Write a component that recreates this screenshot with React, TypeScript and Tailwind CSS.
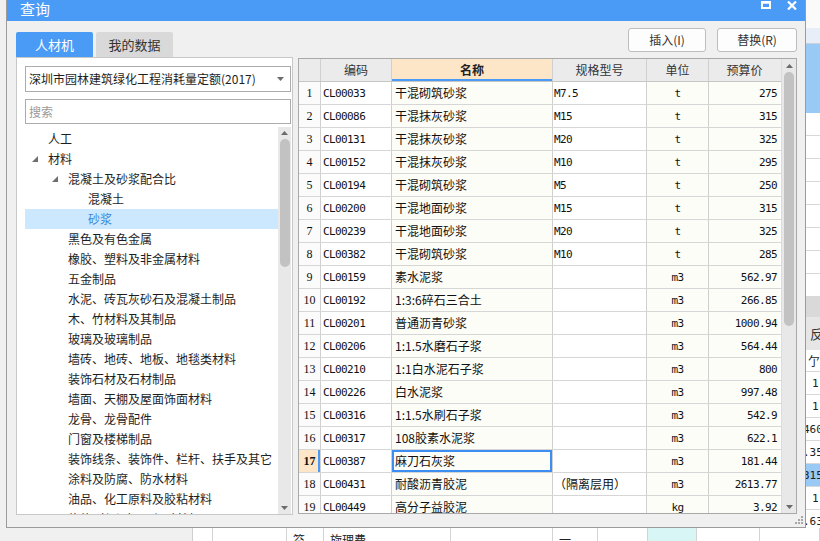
import React from "react";

type Row = { no: number; code: string; name: string; spec: string; unit: string; price: string };

const rows: Row[] = [
  { no: 1, code: "CL00033", name: "干混砌筑砂浆", spec: "M7.5", unit: "t", price: "275" },
  { no: 2, code: "CL00086", name: "干混抹灰砂浆", spec: "M15", unit: "t", price: "315" },
  { no: 3, code: "CL00131", name: "干混抹灰砂浆", spec: "M20", unit: "t", price: "325" },
  { no: 4, code: "CL00152", name: "干混抹灰砂浆", spec: "M10", unit: "t", price: "295" },
  { no: 5, code: "CL00194", name: "干混砌筑砂浆", spec: "M5", unit: "t", price: "250" },
  { no: 6, code: "CL00200", name: "干混地面砂浆", spec: "M15", unit: "t", price: "315" },
  { no: 7, code: "CL00239", name: "干混地面砂浆", spec: "M20", unit: "t", price: "325" },
  { no: 8, code: "CL00382", name: "干混砌筑砂浆", spec: "M10", unit: "t", price: "285" },
  { no: 9, code: "CL00159", name: "素水泥浆", spec: "", unit: "m3", price: "562.97" },
  { no: 10, code: "CL00192", name: "1:3:6碎石三合土", spec: "", unit: "m3", price: "266.85" },
  { no: 11, code: "CL00201", name: "普通沥青砂浆", spec: "", unit: "m3", price: "1000.94" },
  { no: 12, code: "CL00206", name: "1:1.5水磨石子浆", spec: "", unit: "m3", price: "564.44" },
  { no: 13, code: "CL00210", name: "1:1白水泥石子浆", spec: "", unit: "m3", price: "800" },
  { no: 14, code: "CL00226", name: "白水泥浆", spec: "", unit: "m3", price: "997.48" },
  { no: 15, code: "CL00316", name: "1:1.5水刷石子浆", spec: "", unit: "m3", price: "542.9" },
  { no: 16, code: "CL00317", name: "108胶素水泥浆", spec: "", unit: "m3", price: "622.1" },
  { no: 17, code: "CL00387", name: "麻刀石灰浆", spec: "", unit: "m3", price: "181.44" },
  { no: 18, code: "CL00431", name: "耐酸沥青胶泥", spec: "（隔离层用）", unit: "m3", price: "2613.77" },
  { no: 19, code: "CL00449", name: "高分子益胶泥", spec: "", unit: "kg", price: "3.92" },
];

type TreeItem = { label: string; level: 0 | 1 | 2; open?: boolean; selected?: boolean };

const tree: TreeItem[] = [
  { label: "人工", level: 0 },
  { label: "材料", level: 0, open: true },
  { label: "混凝土及砂浆配合比", level: 1, open: true },
  { label: "混凝土", level: 2 },
  { label: "砂浆", level: 2, selected: true },
  { label: "黑色及有色金属", level: 1 },
  { label: "橡胶、塑料及非金属材料", level: 1 },
  { label: "五金制品", level: 1 },
  { label: "水泥、砖瓦灰砂石及混凝土制品", level: 1 },
  { label: "木、竹材料及其制品", level: 1 },
  { label: "玻璃及玻璃制品", level: 1 },
  { label: "墙砖、地砖、地板、地毯类材料", level: 1 },
  { label: "装饰石材及石材制品", level: 1 },
  { label: "墙面、天棚及屋面饰面材料", level: 1 },
  { label: "龙骨、龙骨配件", level: 1 },
  { label: "门窗及楼梯制品", level: 1 },
  { label: "装饰线条、装饰件、栏杆、扶手及其它", level: 1 },
  { label: "涂料及防腐、防水材料", level: 1 },
  { label: "油品、化工原料及胶粘材料", level: 1 },
  { label: "绝热（保温）、耐火材料", level: 1 },
];

const indent = ["pl-[7px]", "pl-[27px]", "pl-[47px]"];

function Caret({ down }: { down?: boolean }) {
  return (
    <svg width="7" height="4" viewBox="0 0 7 4" className="text-[#6b6b6b]">
      <polygon points={down ? "0,0 7,0 3.5,4" : "0,4 7,4 3.5,0"} fill="currentColor" />
    </svg>
  );
}

function TitleBar() {
  return (
    <div className="flex h-[21px] justify-between bg-[#4a9bf5] pl-[13px] pr-[8px]">
      <span className="text-[15px] leading-[18px] text-white">查询</span>
      <div className="flex gap-[16px] pt-[1px]">
        <svg width="10" height="8" viewBox="0 0 10 8">
          <rect x="1" y="1.5" width="8" height="5.5" fill="none" stroke="white" strokeWidth="2" />
          <rect x="0" y="0" width="10" height="2.5" fill="white" />
        </svg>
        <svg width="10" height="9" viewBox="0 0 10 9">
          <path d="M1 0.5 L9 8.5 M9 0.5 L1 8.5" stroke="white" strokeWidth="2.2" />
        </svg>
      </div>
    </div>
  );
}

function LeftPanel() {
  return (
    <div className="flex w-[277px] flex-col border border-[#c8c8c8] bg-white pl-[8px] pr-[1px] pt-[8px]">
      <div className="flex h-[26px] items-center justify-between border border-[#acacac] bg-white pl-[3px] pr-[6px]">
        <span className="text-[12px] leading-none text-[#1e1e1e]">深圳市园林建筑绿化工程消耗量定额(2017)</span>
        <Caret down />
      </div>
      <div className="mt-[7px] flex h-[25px] items-center border border-[#acacac] pl-[3px] text-[12px] leading-none text-[#9a9a9a]">
        搜索
      </div>
      <div className="mt-[3px] flex min-h-0 flex-1 overflow-hidden">
        <div className="min-w-0 flex-1 pt-[2px]">
          {tree.map((t) => (
            <div
              key={t.label}
              className={`flex h-[20px] items-center whitespace-nowrap ${indent[t.level]} ${
                t.selected ? "bg-[#cce8ff] text-[#3a86d8]" : "text-[#1e1e1e]"
              }`}
            >
              <span className="flex w-[16px] items-center">
                {t.open && (
                  <svg width="6" height="6" viewBox="0 0 6 6">
                    <polygon points="6,0 6,6 0,6" fill="#6e6e6e" />
                  </svg>
                )}
              </span>
              <span className="text-[12px] leading-none">{t.label}</span>
            </div>
          ))}
        </div>
        <div className="flex w-[13px] flex-col items-center bg-[#e8e8e8]">
          <div className="flex h-[12px] items-center">
            <Caret />
          </div>
          <div className="h-[128px] w-[10px] rounded-full bg-[#c2c2c2]" />
          <div className="flex-1" />
          <div className="flex h-[12px] items-center">
            <Caret down />
          </div>
        </div>
      </div>
    </div>
  );
}

const mono = "font-['DejaVu_Sans_Mono',monospace] text-[11px] tracking-[-0.6px]";

function DataTable() {
  return (
    <div className="mt-[1px] flex h-[456px] flex-1 border border-[#a9a9a9] bg-white">
      <div className="flex min-w-0 flex-1 flex-col overflow-hidden">
        <div className="flex h-[23px] shrink-0 border-b border-[#c6c6c6] bg-[#ebebeb] text-[12px] leading-none text-[#333]">
          <div className="w-[22px] border-r border-[#d0d0d0]" />
          <div className="flex w-[71px] items-center justify-center border-r border-[#d0d0d0]">编码</div>
          <div className="flex w-[161px] items-center justify-center border-r border-[#d0d0d0] bg-[#fde6c8] font-bold text-[#222] shadow-[inset_0_-2px_0_#4a9bf5]">
            名称
          </div>
          <div className="flex w-[94px] items-center justify-center border-r border-[#d0d0d0]">规格型号</div>
          <div className="flex w-[62px] items-center justify-center border-r border-[#d0d0d0]">单位</div>
          <div className="flex w-[71px] items-center justify-center">预算价</div>
        </div>
        {rows.map((r) => {
          const sel = r.no === 17;
          return (
            <div key={r.no} className="flex h-[23px] shrink-0 border-b border-[#d6d6d6] leading-none text-[#111]">
              <div
                className={`flex w-[22px] items-center justify-center border-r border-[#d0d0d0] font-['Liberation_Serif',serif] text-[12px] ${
                  sel ? "bg-[#fde6c8] font-bold shadow-[inset_-2px_0_0_#4a9bf5]" : "bg-[#fbfbfb]"
                }`}
              >
                {r.no}
              </div>
              <div className={`flex w-[71px] items-center border-r border-[#d0d0d0] pl-[2px] ${mono}`}>{r.code}</div>
              <div
                className={`flex w-[161px] items-center border-r border-[#d0d0d0] bg-[#fdfdf8] pl-[3px] text-[12px] ${
                  sel ? "shadow-[inset_0_0_0_2px_#3c8ef2]" : ""
                }`}
              >
                {r.name}
              </div>
              <div className={`flex w-[94px] items-center border-r border-[#d0d0d0] pl-[1px] ${r.spec.startsWith("M") ? mono : "text-[12px]"}`}>
                {r.spec}
              </div>
              <div className={`flex w-[62px] items-center justify-center border-r border-[#d0d0d0] bg-[#fdfdf8] ${mono}`}>{r.unit}</div>
              <div className={`flex w-[71px] items-center justify-end bg-[#fdfdf8] pr-[3px] ${mono}`}>{r.price}</div>
            </div>
          );
        })}
      </div>
      <div className="flex w-[15px] flex-col items-center border-l border-[#dcdcdc] bg-[#e8e8e8]">
        <div className="flex h-[13px] items-center">
          <Caret />
        </div>
        <div className="h-[254px] w-[10px] rounded-full bg-[#c2c2c2]" />
        <div className="flex-1" />
        <div className="flex h-[12px] items-center">
          <Caret down />
        </div>
      </div>
    </div>
  );
}

function Grip() {
  const dots = [
    [6, 0],
    [3, 3],
    [6, 3],
    [0, 6],
    [3, 6],
    [6, 6],
  ];
  return (
    <svg width="8" height="8" viewBox="0 0 8 8" className="absolute bottom-[3px] right-[2px]">
      {dots.map(([x, y]) => (
        <rect key={`${x}-${y}`} x={x} y={y} width="2" height="2" fill="#a8a8a8" />
      ))}
    </svg>
  );
}

function Dialog() {
  return (
    <div className="flex w-[800px] flex-col border-x border-b border-[#9b9b9b] bg-[#f0f0f0]">
      <TitleBar />
      <div className="relative flex flex-1 flex-col pl-[9px] pr-[8px] pt-[7px]">
        <div className="flex h-[29px] justify-between">
          <div className="flex gap-[3px] self-end">
            <div className="flex h-[25px] w-[77px] items-center justify-center rounded-t-[2px] bg-[#4a9bf5] text-[13px] leading-none text-white">
              人材机
            </div>
            <div className="flex h-[25px] w-[77px] items-center justify-center rounded-t-[2px] bg-[#d9d9d9] text-[13px] leading-none text-[#333]">
              我的数据
            </div>
          </div>
          <div className="flex gap-[11px] self-start">
            <button className="h-[24px] w-[78px] rounded-[3px] border border-[#bdbdbd] bg-[#fdfdfd] text-[12px] leading-none text-[#333]">
              插入(I)
            </button>
            <button className="h-[24px] w-[80px] rounded-[3px] border border-[#bdbdbd] bg-[#fdfdfd] text-[12px] leading-none text-[#333]">
              替换(R)
            </button>
          </div>
        </div>
        <div className="flex h-[458px] gap-[5px]">
          <LeftPanel />
          <DataTable />
        </div>
        <Grip />
      </div>
    </div>
  );
}

function BackdropRight() {
  const vals = ["1", "1", "460", ".35", "315", "1", ".63"];
  return (
    <div className="flex min-w-0 flex-1 flex-col overflow-hidden bg-white font-['DejaVu_Sans_Mono',monospace] text-[11px] leading-none text-[#222]">
      <div className="h-[28px] shrink-0 bg-[#fafafa]" />
      <div className="h-[16px] shrink-0 border-b border-[#c9d1dd] bg-[#e8eef7]" />
      <div className="h-[69px] shrink-0 bg-[#99c9f5]" />
      {[0, 1, 2, 3, 4, 5, 6, 7].map((i) => (
        <div key={i} className="h-[23px] shrink-0 border-b border-[#d8d8d8]" />
      ))}
      <div className="h-[20px] shrink-0 bg-[#d9d9d9]" />
      <div className="flex h-[33px] shrink-0 items-center bg-[#e6e6e6] pl-[4px] font-['Noto_Sans_CJK_SC',sans-serif] text-[13px] text-[#333]">
        反
      </div>
      <div className="flex h-[22px] shrink-0 items-center border-b border-[#d8d8d8] pl-[2px] font-['Noto_Sans_CJK_SC',sans-serif] text-[12px]">
        亇
      </div>
      {vals.map((v, i) => (
        <div
          key={i}
          className={`flex h-[23px] shrink-0 items-center whitespace-nowrap border-b border-[#d8d8d8] ${
            v.length > 1 ? "ml-[-3px]" : "pl-[6px]"
          } ${v === "315" ? "bg-[#99c9f5]" : ""}`}
        >
          {v}
        </div>
      ))}
    </div>
  );
}

function BackdropBottom() {
  const cells: { w: string; text?: string; bg?: string }[] = [
    { w: "w-[20px]" },
    { w: "w-[74px]" },
    { w: "w-[37px]", text: "笞" },
    { w: "w-[127px]", text: "旋理费" },
    { w: "w-[102px]" },
    { w: "w-[45px]", text: "一" },
    { w: "w-[50px]" },
    { w: "w-[49px]", bg: "bg-[#d8f6f6]" },
    { w: "w-[63px]" },
    { w: "w-[60px]" },
  ];
  return (
    <div className="flex h-[13px] shrink-0 overflow-hidden">
      <div className="w-[193px] border-r border-[#cfcfcf] bg-[#f0f0f0]" />
      {cells.map((c, i) => (
        <div
          key={i}
          className={`${c.w} shrink-0 border-r border-[#d4d4d4] ${c.bg ?? "bg-white"} whitespace-nowrap pl-[6px] pt-[6px] text-[12px] leading-[12px] text-[#222]`}
        >
          {c.text}
        </div>
      ))}
    </div>
  );
}

export default function App() {
  return (
    <div className="flex h-[541px] w-[820px] flex-col overflow-hidden bg-[#f0f0f0] font-['Noto_Sans_CJK_SC',sans-serif] text-[12px] text-[#1e1e1e]">
      <div className="flex h-[528px] shrink-0">
        <div className="w-[6px] shrink-0 bg-[#f0f0f0]" />
        <Dialog />
        <BackdropRight />
      </div>
      <BackdropBottom />
    </div>
  );
}
